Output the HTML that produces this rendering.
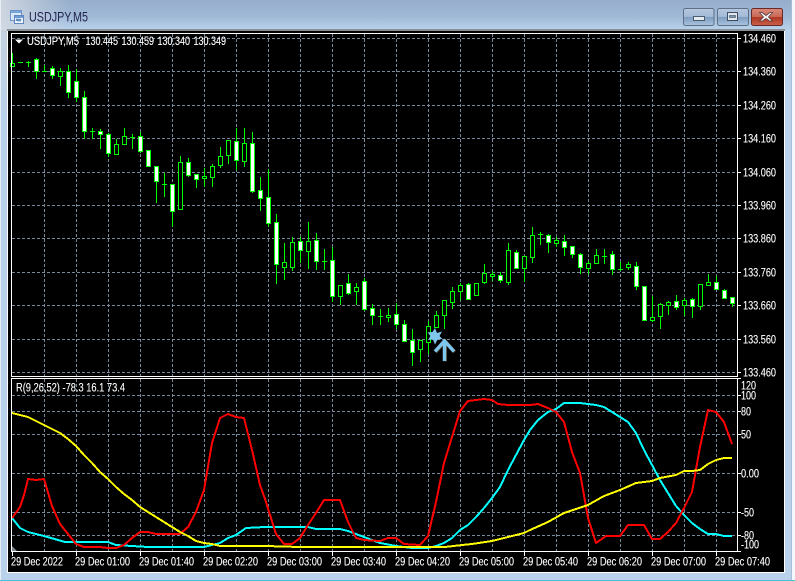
<!DOCTYPE html>
<html lang="en">
<head>
<meta charset="utf-8">
<title>USDJPY,M5</title>
<style>
html,body{margin:0;padding:0;background:#b9d1ea;overflow:hidden}
svg{display:block}
text{font-family:"Liberation Sans",sans-serif;fill:#fff;font-size:11.5px;stroke:#fff;stroke-width:.12px}
</style>
</head>
<body>
<svg width="795" height="581" viewBox="0 0 795 581" xmlns="http://www.w3.org/2000/svg">
<defs>
<linearGradient id="tb" x1="0" y1="0" x2="0" y2="1"><stop offset="0" stop-color="#97aecb"/><stop offset=".55" stop-color="#9fb9d6"/><stop offset="1" stop-color="#bad2ec"/></linearGradient>
<linearGradient id="tl" x1="0" y1="0" x2="1" y2="0"><stop offset="0" stop-color="#d3d9e2" stop-opacity=".9"/><stop offset="1" stop-color="#d3d9e2" stop-opacity="0"/></linearGradient>
<linearGradient id="sl" x1="0" y1="0" x2="0" y2="1"><stop offset="0" stop-color="#c5d1df"/><stop offset="1" stop-color="#b9d1ea"/></linearGradient>
<linearGradient id="bt" x1="0" y1="0" x2="0" y2="1"><stop offset="0" stop-color="#b5c8de"/><stop offset=".48" stop-color="#a3bad6"/><stop offset=".52" stop-color="#7f9dc0"/><stop offset="1" stop-color="#a9c4df"/></linearGradient>
<linearGradient id="cl" x1="0" y1="0" x2="0" y2="1"><stop offset="0" stop-color="#d98a7a"/><stop offset=".48" stop-color="#c96a58"/><stop offset=".52" stop-color="#b03622"/><stop offset="1" stop-color="#c9604a"/></linearGradient>
</defs>

<!-- window frame -->
<rect width="795" height="581" fill="#b9d1ea"/>
<rect width="795" height="30" fill="url(#tb)"/>
<rect width="70" height="30" fill="url(#tl)"/>
<rect x="0" y="30" width="7" height="90" fill="url(#sl)"/>
<rect x="0" y="0" width="1" height="581" fill="#e8eef5"/>
<rect x="792" y="0" width="3" height="581" fill="#f4f7fb"/>
<rect x="791" y="0" width="1" height="581" fill="#a9bdd4"/>
<rect x="0" y="580" width="795" height="1" fill="#45c2d6"/>
<rect x="7" y="29" width="778" height="2" fill="#8a8f96"/>
<rect x="7" y="31" width="778" height="542" fill="#000"/>
<rect x="7" y="31" width="1" height="542" fill="#fff"/>
<rect x="784" y="31" width="1" height="542" fill="#fff"/>
<rect x="7" y="572" width="778" height="1" fill="#fff"/>

<!-- title icon -->
<g shape-rendering="crispEdges">
<rect x="10.5" y="10.5" width="11" height="10" fill="#d9e8f7" stroke="#6f93c4"/>
<rect x="11" y="11" width="10" height="2" fill="#7aa5d8"/>
<rect x="14.5" y="15.5" width="9" height="8" fill="#eef5fc" stroke="#5f87bd"/>
<rect x="15" y="16" width="8" height="2" fill="#6d9bd3"/>
<path d="M16 21l1-2 1 2 1-2 1 2 1-2" fill="none" stroke="#3a6cb0"/>
</g>
<text x="29" y="21.500" textLength="59" lengthAdjust="spacingAndGlyphs" style="fill:#23234f;stroke:none;font-size:13.5px">USDJPY,M5</text>

<!-- window buttons -->
<rect x="683.5" y="8.5" width="30.5" height="17" rx="2" fill="url(#bt)" stroke="#5e6f86"/>
<rect x="693.5" y="16.5" width="11" height="4" fill="#e6ebf1" stroke="#4c5b70"/>
<rect x="717.5" y="8.5" width="31" height="17" rx="2" fill="url(#bt)" stroke="#5e6f86"/>
<rect x="727.5" y="12.5" width="10" height="8" fill="#dfe6ee" stroke="#3f4e63"/>
<rect x="729.5" y="15.5" width="6" height="2" fill="#7c93ad" stroke="#3f4e63" stroke-width=".6"/>
<rect x="751.5" y="8.5" width="31" height="17" rx="2" fill="url(#cl)" stroke="#6b2a28"/>
<path d="M762 12.5l4 3 4-3h2.5l-4 4.500 4 4h-3l-3.500-2.500-3.500 2.500h-3l4-4-4-4.500z" fill="#f1f1f1" stroke="#5a3a3a" stroke-width=".8"/>

<!-- grid -->
<g stroke="#778899" stroke-width="1" stroke-dasharray="3 2" fill="none" shape-rendering="crispEdges">
<path d="M12 38.5H737M12 71.5H737M12 105.5H737M12 138.5H737M12 172.5H737M12 205.5H737M12 238.5H737M12 272.5H737M12 305.5H737M12 339.5H737M12 372.5H737"/>
<path d="M12 395.5H737M12 411.5H737M12 434.5H737M12 473.5H737M12 512.5H737M12 535.5H737"/>
<path d="M44.5 34V376M76.5 34V376M108.5 34V376M140.5 34V376M172.5 34V376M204.5 34V376M236.5 34V376M268.5 34V376M300.5 34V376M332.5 34V376M364.5 34V376M396.5 34V376M428.5 34V376M460.5 34V376M492.5 34V376M524.5 34V376M556.5 34V376M588.5 34V376M620.5 34V376M652.5 34V376M684.5 34V376M716.5 34V376"/>
<path d="M44.5 379V551M76.5 379V551M108.5 379V551M140.5 379V551M172.5 379V551M204.5 379V551M236.5 379V551M268.5 379V551M300.5 379V551M332.5 379V551M364.5 379V551M396.5 379V551M428.5 379V551M460.5 379V551M492.5 379V551M524.5 379V551M556.5 379V551M588.5 379V551M620.5 379V551M652.5 379V551M684.5 379V551M716.5 379V551"/>
</g>

<!-- candle wicks -->
<g shape-rendering="crispEdges">
<path fill="none" stroke="#00ff00" stroke-width="1" d="M12.5 53V66M18 62.5H23M26 62.5H31M28.5 61V67M36.5 58V79M42 71.5H47M44.5 65V72M52.5 66V79M60.5 68V86M68.5 65V98M76.5 69V102M84.5 91V139M90 131.5H95M92.5 128V139M100.5 129V149M108.5 133V157M116.5 139V155M124.5 128V144M130 137.5H135M132.5 134V149M140.5 132V153M148.5 150V167M156.5 166V203M162 184.5H167M164.5 173V197M172.5 184V227M180.5 156V209M188.5 158V177M196.5 174V188M204.5 168V187M212.5 164V187M220.5 147V168M228.5 140V164M236.5 128V170M244.5 128V167M252.5 132V193M260.5 177V211M268.5 169V227M276.5 214V284M284.5 243V280M292.5 237V271M300.5 237V263M308.5 222V269M316.5 233V270M322 261.5H327M324.5 249V270M332.5 247V302M340.5 285V305M348.5 274V295M356.5 283V305M364.5 278V311M372.5 304V325M378 316.5H383M380.5 309V325M388.5 308V322M396.5 303V329M404.5 320V342M412.5 329V366M420.5 340V362M428.5 321V354M436.5 311V327M444.5 300V329M452.5 287V309M460.5 283V300M468.5 283V300M476.5 283V295M484.5 264V284M492.5 271V281M500.5 272V283M508.5 243V285M516.5 250V269M524.5 256V282M532.5 227V263M538 234.5H543M540.5 232V245M548.5 234V253M556.5 237V247M564.5 235V256M572.5 246V258M580.5 253V274M588.5 261V274M596.5 249V263M602 256.5H607M604.5 249V264M612.5 251V275M618 269.5H623M620.5 262V271M628.5 262V270M636.5 262V290M644.5 286V320M652.5 296V322M660.5 303V329M668.5 301V315M676.5 295V310M684.5 298V316M692.5 298V318M700.5 284V310M708.5 274V286M716.5 276V290M724.5 289V299M732.5 297V307"/>
<!-- filled -->
<g fill="#fff" stroke="#00ff00">
<rect x="34.5" y="59.5" width="4" height="12"/>
<rect x="50.5" y="68.5" width="4" height="7"/>
<rect x="66.5" y="71.5" width="4" height="21"/>
<rect x="74.5" y="81.5" width="4" height="16"/>
<rect x="82.5" y="97.5" width="4" height="34"/>
<rect x="98.5" y="131.5" width="4" height="3"/>
<rect x="106.5" y="134.5" width="4" height="19"/>
<rect x="138.5" y="136.5" width="4" height="15"/>
<rect x="146.5" y="150.5" width="4" height="16"/>
<rect x="154.5" y="166.5" width="4" height="15"/>
<rect x="170.5" y="184.5" width="4" height="27"/>
<rect x="186.5" y="162.5" width="4" height="13"/>
<rect x="194.5" y="174.5" width="4" height="5"/>
<rect x="234.5" y="141.5" width="4" height="19"/>
<rect x="250.5" y="143.5" width="4" height="48"/>
<rect x="258.5" y="190.5" width="4" height="8"/>
<rect x="266.5" y="197.5" width="4" height="26"/>
<rect x="274.5" y="222.5" width="4" height="42"/>
<rect x="298.5" y="241.5" width="4" height="9"/>
<rect x="314.5" y="240.5" width="4" height="21"/>
<rect x="330.5" y="260.5" width="4" height="36"/>
<rect x="346.5" y="283.5" width="4" height="10"/>
<rect x="362.5" y="281.5" width="4" height="28"/>
<rect x="370.5" y="308.5" width="4" height="7"/>
<rect x="394.5" y="314.5" width="4" height="10"/>
<rect x="402.5" y="324.5" width="4" height="17"/>
<rect x="410.5" y="340.5" width="4" height="12"/>
<rect x="466.5" y="284.5" width="4" height="15"/>
<rect x="498.5" y="275.5" width="4" height="5"/>
<rect x="514.5" y="252.5" width="4" height="16"/>
<rect x="546.5" y="235.5" width="4" height="7"/>
<rect x="562.5" y="241.5" width="4" height="6"/>
<rect x="570.5" y="246.5" width="4" height="8"/>
<rect x="578.5" y="254.5" width="4" height="13"/>
<rect x="610.5" y="254.5" width="4" height="15"/>
<rect x="634.5" y="266.5" width="4" height="20"/>
<rect x="642.5" y="286.5" width="4" height="34"/>
<rect x="674.5" y="301.5" width="4" height="6"/>
<rect x="690.5" y="299.5" width="4" height="7"/>
<rect x="714.5" y="282.5" width="4" height="7"/>
<rect x="722.5" y="290.5" width="4" height="8"/>
<rect x="730.5" y="297.5" width="4" height="6"/>
</g>
<!-- hollow -->
<g fill="#000" stroke="#00ff00">
<rect x="10.5" y="63.5" width="4" height="3"/>
<rect x="58.5" y="71.5" width="4" height="5"/>
<rect x="114.5" y="144.5" width="4" height="10"/>
<rect x="122.5" y="136.5" width="4" height="8"/>
<rect x="178.5" y="162.5" width="4" height="47"/>
<rect x="202.5" y="176.5" width="4" height="2"/>
<rect x="210.5" y="166.5" width="4" height="11"/>
<rect x="218.5" y="156.5" width="4" height="9"/>
<rect x="226.5" y="140.5" width="4" height="15"/>
<rect x="242.5" y="143.5" width="4" height="18"/>
<rect x="282.5" y="262.5" width="4" height="5"/>
<rect x="290.5" y="242.5" width="4" height="25"/>
<rect x="306.5" y="241.5" width="4" height="10"/>
<rect x="338.5" y="285.5" width="4" height="11"/>
<rect x="354.5" y="287.5" width="4" height="4"/>
<rect x="386.5" y="315.5" width="4" height="2"/>
<rect x="418.5" y="340.5" width="4" height="9"/>
<rect x="426.5" y="326.5" width="4" height="16"/>
<rect x="434.5" y="315.5" width="4" height="12"/>
<rect x="442.5" y="300.5" width="4" height="15"/>
<rect x="450.5" y="291.5" width="4" height="11"/>
<rect x="458.5" y="285.5" width="4" height="6"/>
<rect x="474.5" y="283.5" width="4" height="12"/>
<rect x="482.5" y="273.5" width="4" height="9"/>
<rect x="490.5" y="274.5" width="4" height="2"/>
<rect x="506.5" y="250.5" width="4" height="32"/>
<rect x="522.5" y="256.5" width="4" height="12"/>
<rect x="530.5" y="235.5" width="4" height="22"/>
<rect x="554.5" y="240.5" width="4" height="3"/>
<rect x="586.5" y="263.5" width="4" height="5"/>
<rect x="594.5" y="255.5" width="4" height="8"/>
<rect x="626.5" y="264.5" width="4" height="3"/>
<rect x="650.5" y="317.5" width="4" height="3"/>
<rect x="658.5" y="304.5" width="4" height="12"/>
<rect x="666.5" y="302.5" width="4" height="3"/>
<rect x="682.5" y="300.5" width="4" height="5"/>
<rect x="698.5" y="284.5" width="4" height="22"/>
<rect x="706.5" y="282.5" width="4" height="3"/>
</g>
</g>

<!-- star and arrow -->
<path d="M435 328l2 5 5-1.5-2.5 4.500 3 3-5 .5-2.500 5-2-5-5 .5 2.500-4-3-3.500 5-.5z" fill="#7fc6ec"/>
<path d="M444.5 361V342M435 351.500L444.5 341L454 351.500" fill="none" stroke="#4a3a20" stroke-width="3.500" transform="translate(.8 .4)"/>
<path d="M444.5 361V342M435 351.500L444.5 341L454 351.500" fill="none" stroke="#7fc6ec" stroke-width="3.500"/>

<!-- indicator lines -->
<g fill="none" stroke-width="2" stroke-linejoin="round" shape-rendering="crispEdges">
<polyline stroke="#00ffff" points="12,518 20,528 28,532 44,536 65,542 108,542 116,545 132,546 148,547 204,547 212,545 220,543 228,538 236,535 246,528 265,527 308,527 316,529 340,529 348,531 364,537 380,543 396,546 412,548 428,548 436,546 444,543 452,538 460,530 468,525 476,517 484,508 492,498 500,487 508,470 516,455 524,440 530,430 538,420 548,412 556,409 564,403 580,403 588,404 596,405 604,407 612,412 620,417 628,422 636,433 644,450 652,465 660,480 668,493 676,506 684,515 692,523 700,529 708,534 716,534 724,536 732,536"/>
<polyline stroke="#ff0000" points="12,518 20,507 24,495 28,479 36,480 44,479 52,506 60,524 68,534 76,544 84,547 100,547 108,548 116,548 124,545 132,538 140,532 148,532 156,534 180,534 188,527 196,512 204,490 212,443 220,418 228,414 236,417 244,418 252,450 260,485 265,499 276,534 284,544 292,544 300,538 308,525 316,513 324,500 340,500 348,522 356,538 364,540 380,541 388,538 396,538 404,544 420,545 428,536 436,502 444,463 452,437 460,411 468,401 476,400 484,399 492,400 498,404 508,405 530,405 538,404 548,408 556,412 564,422 572,452 580,473 588,518 596,543 606,536 620,536 628,525 644,525 652,539 660,539 668,532 676,523 684,508 692,492 700,447 708,410 716,412 724,422 732,444"/>
<polyline stroke="#ffff00" points="12,413 20,415 28,417 44,425 60,433 68,439 76,446 84,455 92,463 100,472 108,479 116,487 124,494 132,500 140,507 148,512 156,517 164,522 172,527 180,532 188,536 196,541 204,543 212,544 220,546 265,546 300,547 316,547 445,547 462,545 472,544 492,541 508,537 524,533 530,530 548,522 564,513 588,505 604,496 620,490 636,483 652,481 660,478 676,475 684,471 692,471 700,470 708,464 716,460 724,458 732,458"/>
</g>

<!-- panel borders -->
<g fill="none" stroke="#fff" stroke-width="1" shape-rendering="crispEdges">
<path d="M11.5 33.5H737.5V376.5H11.5Z"/>
<path d="M11.5 378.5H737.5V551.5H11.5Z"/>
<path d="M737 38.5H741M737 71.5H741M737 105.5H741M737 138.5H741M737 172.5H741M737 205.5H741M737 238.5H741M737 272.5H741M737 305.5H741M737 339.5H741M737 372.5H741"/>
<path d="M737 378.5H741M737 395.5H741M737 411.5H741M737 434.5H741M737 473.5H741M737 512.5H741M737 535.5H741M737 551.5H741"/>
<path d="M12.5 552V556M76.5 552V556M140.5 552V556M204.5 552V556M268.5 552V556M332.5 552V556M396.5 552V556M460.5 552V556M524.5 552V556M588.5 552V556M652.5 552V556M716.5 552V556"/>
</g>
<path d="M12 546l5 5h-5z" fill="#808890"/>

<!-- header -->
<path d="M15 39.5h8l-4 4z" fill="#fff"/>
<text x="27" y="45" textLength="52" lengthAdjust="spacingAndGlyphs">USDJPY,M5</text>
<text x="85.5" y="45" textLength="32.5" lengthAdjust="spacingAndGlyphs">130.445</text>
<text x="121.5" y="45" textLength="32.5" lengthAdjust="spacingAndGlyphs">130.459</text>
<text x="157.5" y="45" textLength="32.5" lengthAdjust="spacingAndGlyphs">130.340</text>
<text x="193.5" y="45" textLength="32.5" lengthAdjust="spacingAndGlyphs">130.349</text>
<text x="16" y="391.5" textLength="109" lengthAdjust="spacingAndGlyphs">R(9,26,52) -78.3 16.1 73.4</text>

<!-- price axis -->
<g>
<text x="743" y="42.5" textLength="33" lengthAdjust="spacingAndGlyphs">134.460</text>
<text x="743" y="75.5" textLength="33" lengthAdjust="spacingAndGlyphs">134.360</text>
<text x="743" y="109.5" textLength="33" lengthAdjust="spacingAndGlyphs">134.260</text>
<text x="743" y="142.5" textLength="33" lengthAdjust="spacingAndGlyphs">134.160</text>
<text x="743" y="176.5" textLength="33" lengthAdjust="spacingAndGlyphs">134.060</text>
<text x="743" y="209.5" textLength="33" lengthAdjust="spacingAndGlyphs">133.960</text>
<text x="743" y="242.5" textLength="33" lengthAdjust="spacingAndGlyphs">133.860</text>
<text x="743" y="276.5" textLength="33" lengthAdjust="spacingAndGlyphs">133.760</text>
<text x="743" y="309.5" textLength="33" lengthAdjust="spacingAndGlyphs">133.660</text>
<text x="743" y="343.5" textLength="33" lengthAdjust="spacingAndGlyphs">133.560</text>
<text x="743" y="376.5" textLength="33" lengthAdjust="spacingAndGlyphs">133.460</text>
<text x="741" y="389.5" textLength="15" lengthAdjust="spacingAndGlyphs">120</text>
<text x="741" y="399.5" textLength="15" lengthAdjust="spacingAndGlyphs">100</text>
<text x="741" y="415.5" textLength="10" lengthAdjust="spacingAndGlyphs">80</text>
<text x="741" y="438.5" textLength="10" lengthAdjust="spacingAndGlyphs">50</text>
<text x="741" y="477.5" textLength="18" lengthAdjust="spacingAndGlyphs">0.00</text>
<text x="741" y="516.5" textLength="13" lengthAdjust="spacingAndGlyphs">-50</text>
<text x="741" y="539.5" textLength="13" lengthAdjust="spacingAndGlyphs">-80</text>
<text x="741" y="548.5" textLength="18" lengthAdjust="spacingAndGlyphs">-100</text>
</g>

<!-- time axis -->
<g>
<text x="11" y="565.5" textLength="52" lengthAdjust="spacingAndGlyphs">29 Dec 2022</text>
<text x="75" y="565.5" textLength="55" lengthAdjust="spacingAndGlyphs">29 Dec 01:00</text>
<text x="139" y="565.5" textLength="55" lengthAdjust="spacingAndGlyphs">29 Dec 01:40</text>
<text x="203" y="565.5" textLength="55" lengthAdjust="spacingAndGlyphs">29 Dec 02:20</text>
<text x="267" y="565.5" textLength="55" lengthAdjust="spacingAndGlyphs">29 Dec 03:00</text>
<text x="331" y="565.5" textLength="55" lengthAdjust="spacingAndGlyphs">29 Dec 03:40</text>
<text x="395" y="565.5" textLength="55" lengthAdjust="spacingAndGlyphs">29 Dec 04:20</text>
<text x="459" y="565.5" textLength="55" lengthAdjust="spacingAndGlyphs">29 Dec 05:00</text>
<text x="523" y="565.5" textLength="55" lengthAdjust="spacingAndGlyphs">29 Dec 05:40</text>
<text x="587" y="565.5" textLength="55" lengthAdjust="spacingAndGlyphs">29 Dec 06:20</text>
<text x="651" y="565.5" textLength="55" lengthAdjust="spacingAndGlyphs">29 Dec 07:00</text>
<text x="715" y="565.5" textLength="55" lengthAdjust="spacingAndGlyphs">29 Dec 07:40</text>
</g>
</svg>
</body>
</html>
